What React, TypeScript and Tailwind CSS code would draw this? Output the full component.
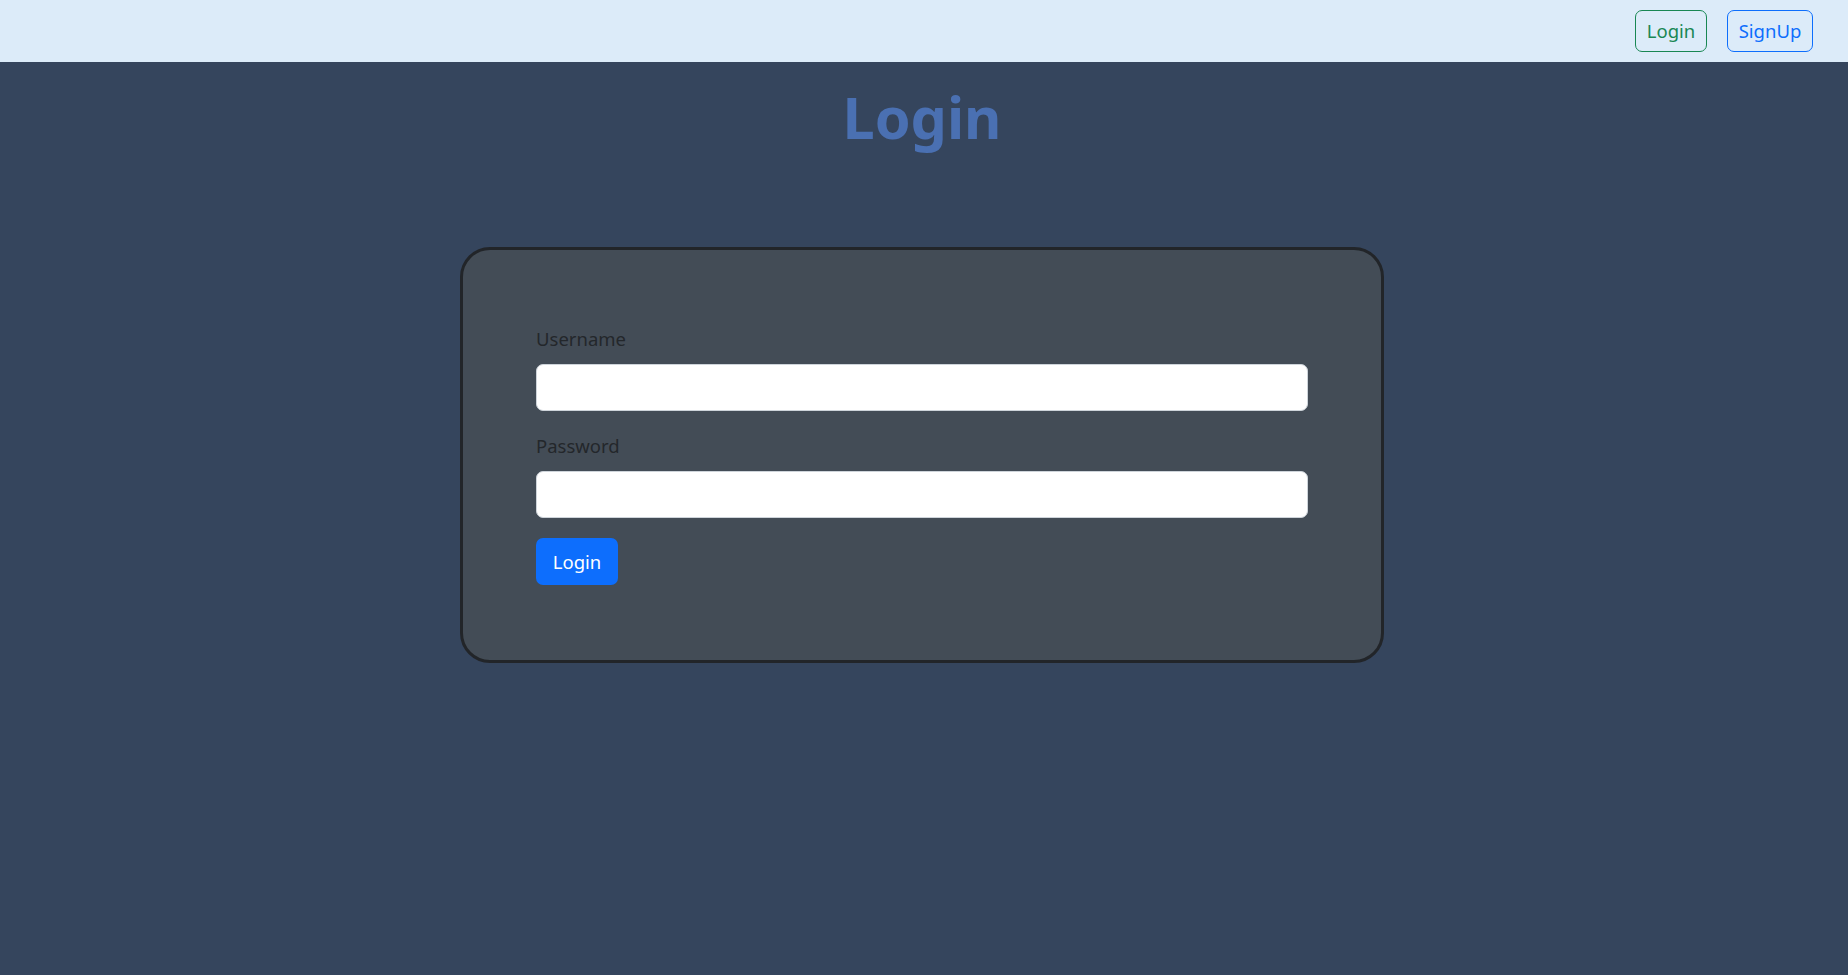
export default function App() {
  return (
    <div className="min-h-[975px] bg-[#35455d] font-['Noto_Sans',sans-serif]">
      <nav className="h-[62px] bg-[#dcebf9] flex items-center justify-end gap-[20px] pr-[35px]">
        <button className="h-[42px] w-[72px] border border-[#198754] text-[#198754] rounded-[7px] text-[18.5px] leading-[30px]">
          Login
        </button>
        <button className="h-[42px] w-[86px] border border-[#0d6efd] text-[#0d6efd] rounded-[7px] text-[18.5px] leading-[30px]">
          SignUp
        </button>
      </nav>

      <main className="pr-[4px]">
        <h1 className="mt-[16px] text-center text-[57.5px] leading-[78px] font-bold text-[#4a70b2]">Login</h1>

        <div className="mt-[91px] mx-auto w-[924px] bg-[#434c56] border-[3px] border-[#222529] rounded-[30px] px-[73px] pt-[74px] pb-[75px]">
          <form onSubmit={(e) => e.preventDefault()}>
            <label htmlFor="username" className="block text-[18.5px] leading-[30px] text-[#23272b] mb-[10px]">
              Username
            </label>
            <input
              id="username"
              type="text"
              className="block w-full h-[47px] bg-white border border-[#ced4da] rounded-[7px] px-[14px] text-[18.5px] outline-none"
            />
            <label htmlFor="password" className="block mt-[20px] text-[18.5px] leading-[30px] text-[#23272b] mb-[10px]">
              Password
            </label>
            <input
              id="password"
              type="password"
              className="block w-full h-[47px] bg-white border border-[#ced4da] rounded-[7px] px-[14px] text-[18.5px] outline-none"
            />
            <button
              type="submit"
              className="mt-[20px] h-[47px] w-[82px] bg-[#0d6efd] text-white rounded-[7px] text-[18.5px] leading-[30px]"
            >
              Login
            </button>
          </form>
        </div>
      </main>
    </div>
  );
}
